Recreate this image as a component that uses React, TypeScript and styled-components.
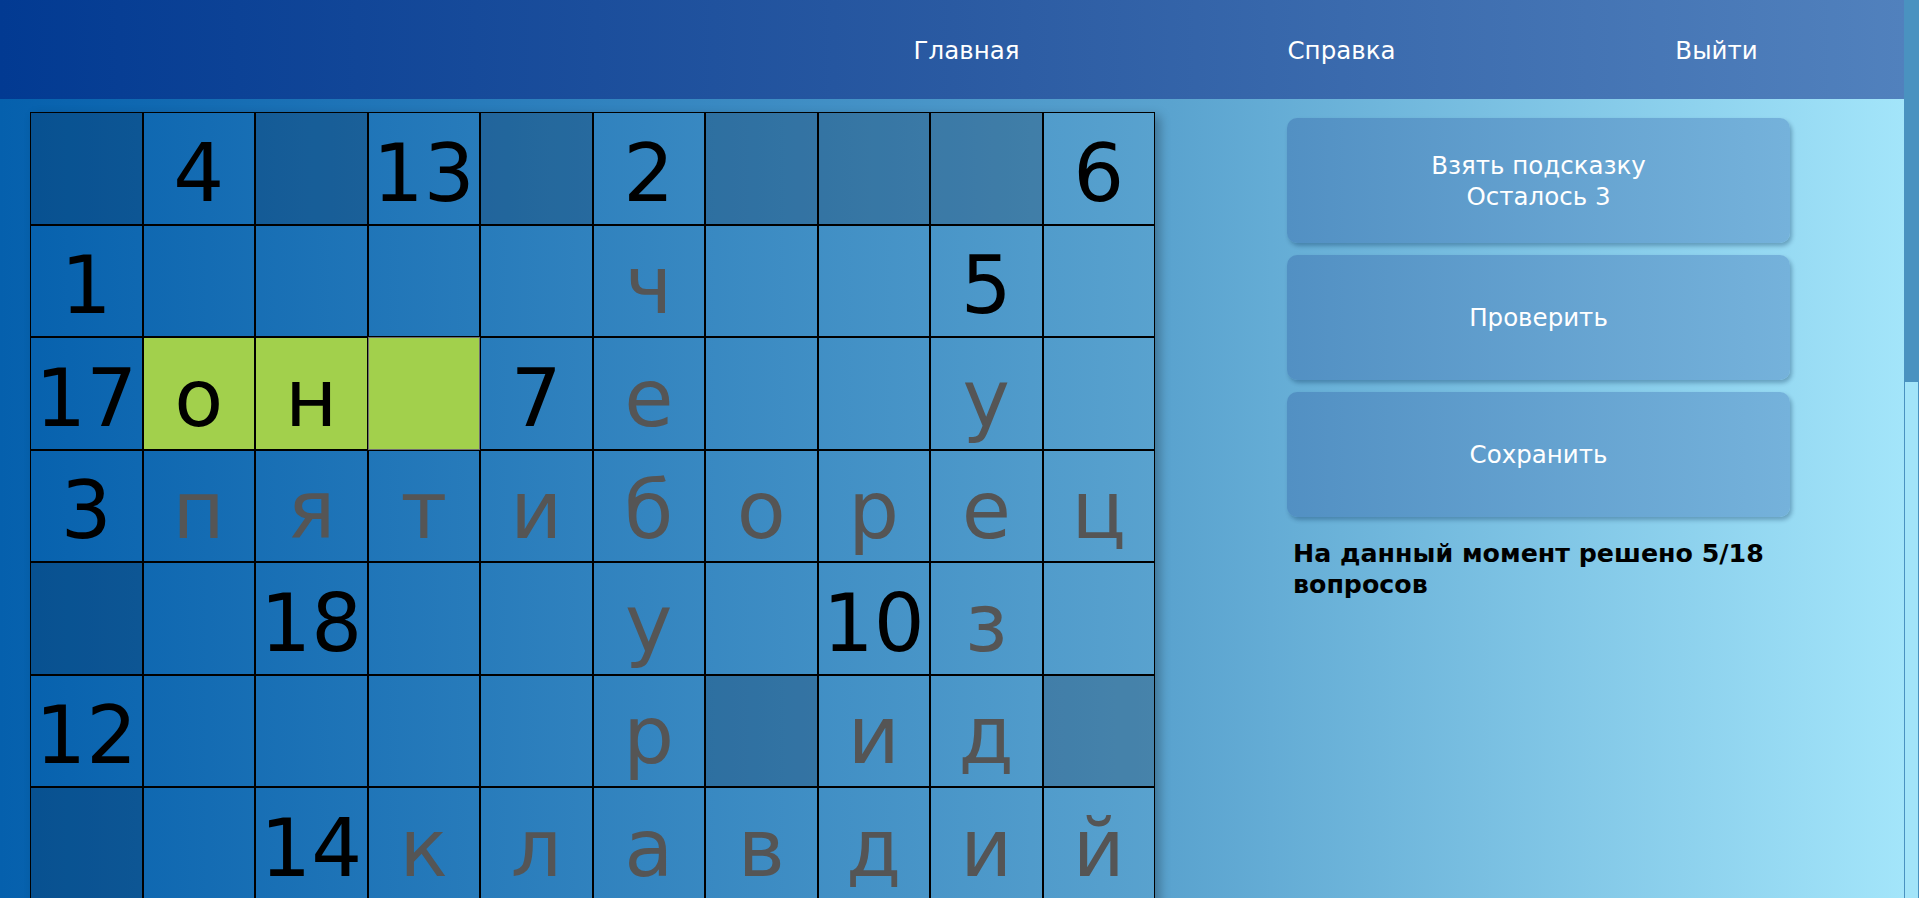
import React from "react";
import styled, { createGlobalStyle } from "styled-components";

const GlobalStyle = createGlobalStyle`
  html {
    background: linear-gradient(to right, #0560ad 0%, #5aa3cf 61%, #a3e5fa 99.2%, #a3e5fa 100%);
    min-height: 100%;
    scrollbar-width: none;
  }
  html::-webkit-scrollbar {
    width: 0;
    height: 0;
  }
  body {
    margin: 0;
    font-family: "DejaVu Sans", Verdana, sans-serif;
  }
`;

const Page = styled.div`
  margin-right: 15px;
`;

const ScrollTrack = styled.div`
  position: fixed;
  top: 0;
  right: 0;
  width: 15px;
  height: 100vh;
  box-sizing: border-box;
  background: #a2e4f9;
  border-left: 1px solid #4a92c0;
  border-right: 1px solid #4a92c0;
  z-index: 10;
`;

const ScrollThumb = styled.div`
  height: 382px;
  margin: 0 -1px;
  background: #4a92c0;
`;

const Header = styled.header`
  height: 99px;
  box-sizing: border-box;
  padding-top: 2px;
  display: flex;
  justify-content: flex-end;
  align-items: center;
  background: linear-gradient(to right, #023a92 0%, #2a5aa2 50%, #5181bd 100%);
`;

const Nav = styled.nav`
  display: grid;
  grid-template-columns: repeat(3, 375px);
  align-items: center;
`;

const NavLink = styled.a`
  text-align: center;
  color: #ffffff;
  font-size: 24.5px;
  text-decoration: none;
  cursor: pointer;
`;

const Main = styled.main`
  display: flex;
  align-items: flex-start;
  padding: 13px 0 86px 30px;
`;

const Board = styled.div`
  display: grid;
  grid-template-columns: repeat(10, 112.5px);
  grid-auto-rows: 112.5px;
  box-shadow: 5px 4px 10px rgba(0, 0, 0, 0.28);
`;

type Kind = "block" | "num" | "letter" | "empty" | "green" | "focus";

const cellBg: Record<Kind, string> = {
  block: "rgba(10, 25, 45, 0.22)",
  num: "transparent",
  letter: "transparent",
  empty: "transparent",
  green: "#a2d04c",
  focus: "#a2d04c",
};

const Cell = styled.div<{ $kind: Kind }>`
  box-sizing: border-box;
  border: 1px solid ${(p) => (p.$kind === "focus" ? "#6f6f6f" : "#000000")};
  background: ${(p) => cellBg[p.$kind]};
  display: flex;
  align-items: center;
  justify-content: center;
  padding-top: 10px;
  font-size: 80px;
  line-height: 1.164;
  color: ${(p) => (p.$kind === "letter" ? "#555555" : "#000000")};
  overflow: hidden;
`;

const Side = styled.aside`
  margin-left: 132px;
  margin-top: 6px;
  width: 503px;
  display: flex;
  flex-direction: column;
  gap: 12px;
`;

const ActionButton = styled.button`
  height: 125px;
  border: none;
  border-radius: 10px;
  background: linear-gradient(to right, #5290c3 0%, #75b2db 100%);
  box-shadow: 2px 3px 4px rgba(0, 40, 80, 0.32);
  color: #ffffff;
  font-family: "DejaVu Sans", Verdana, sans-serif;
  font-size: 24.5px;
  line-height: 31px;
  text-align: center;
  cursor: pointer;
`;

const Status = styled.p`
  margin: 9px 0 0 0;
  padding-left: 6px;
  font-size: 25.3px;
  font-weight: bold;
  line-height: 31px;
  color: #000000;
`;

const rows: string[][] = [
  ["#", "4", "#", "13", "#", "2", "#", "#", "#", "6"],
  ["1", "", "", "", "", "ч", "", "", "5", ""],
  ["17", "g:о", "g:н", "f:", "7", "е", "", "", "у", ""],
  ["3", "п", "я", "т", "и", "б", "о", "р", "е", "ц"],
  ["#", "", "18", "", "", "у", "", "10", "з", ""],
  ["12", "", "", "", "", "р", "#", "и", "д", "#"],
  ["#", "", "14", "к", "л", "а", "в", "д", "и", "й"],
  ["#", "", "", "#", "", "", "#", "", "", "#"],
  ["8", "", "", "", "", "", "", "#", "", ""],
  ["#", "", "#", "", "#", "", "#", "", "#", ""],
  ["9", "", "", "", "", "", "", "", "", ""],
  ["#", "", "#", "", "#", "#", "", "#", "", "#"],
  ["11", "", "", "", "", "", "", "", "", "#"],
  ["#", "", "#", "", "#", "", "#", "#", "", "#"],
  ["15", "", "", "", "", "", "#", "16", "", ""],
  ["#", "", "#", "", "#", "", "#", "", "#", ""],
  ["#", "#", "#", "#", "#", "", "#", "#", "#", "#"],
];

function classify(v: string): { kind: Kind; text: string } {
  if (v === "#") return { kind: "block", text: "" };
  if (v.startsWith("g:")) return { kind: "green", text: v.slice(2) };
  if (v.startsWith("f:")) return { kind: "focus", text: v.slice(2) };
  if (v === "") return { kind: "empty", text: "" };
  if (/^\d+$/.test(v)) return { kind: "num", text: v };
  return { kind: "letter", text: v };
}

export default function App() {
  return (
    <>
      <GlobalStyle />
      <Page>
        <Header>
          <Nav>
            <NavLink>Главная</NavLink>
            <NavLink>Справка</NavLink>
            <NavLink>Выйти</NavLink>
          </Nav>
        </Header>
        <Main>
          <Board>
            {rows.map((row, r) =>
              row.map((v, c) => {
                const { kind, text } = classify(v);
                return (
                  <Cell key={`${r}-${c}`} $kind={kind}>
                    {text}
                  </Cell>
                );
              })
            )}
          </Board>
          <Side>
            <ActionButton>
              Взять подсказку
              <br />
              Осталось 3
            </ActionButton>
            <ActionButton>Проверить</ActionButton>
            <ActionButton>Сохранить</ActionButton>
            <Status>На данный момент решено 5/18 вопросов</Status>
          </Side>
        </Main>
      </Page>
      <ScrollTrack>
        <ScrollThumb />
      </ScrollTrack>
    </>
  );
}
